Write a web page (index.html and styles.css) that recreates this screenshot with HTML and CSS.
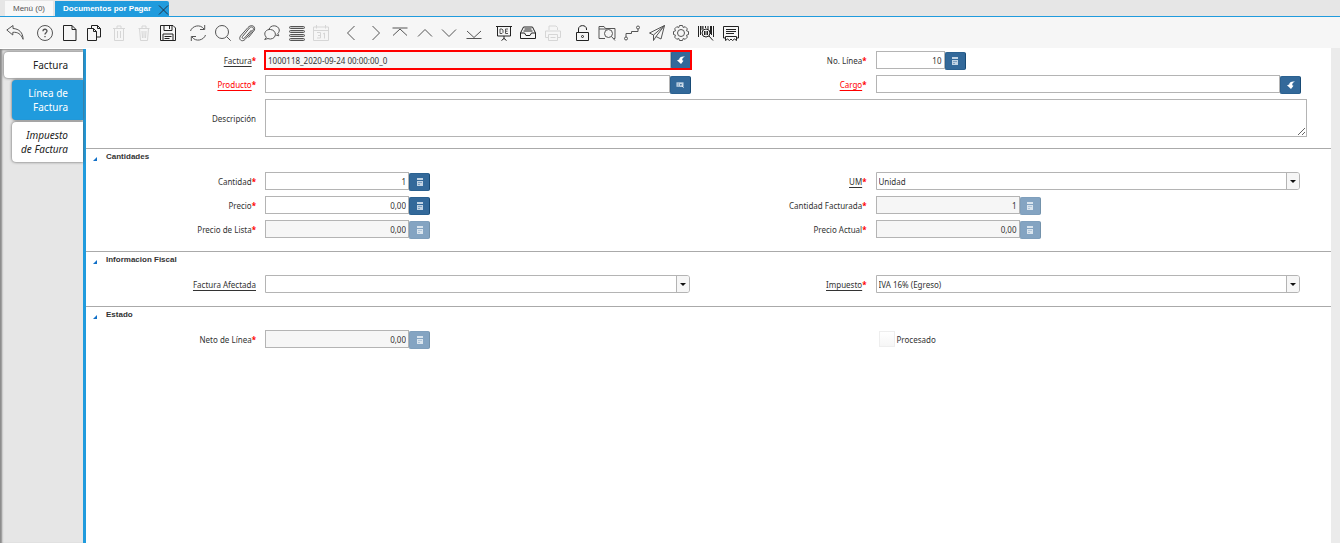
FILE: index.html
```html
<!DOCTYPE html>
<html lang="es">
<head>
  <meta charset="utf-8">
  <title>Documentos por Pagar</title>
  <link rel="stylesheet" href="styles.css">
</head>
<body>
  <svg class="sprite" width="0" height="0" aria-hidden="true">
    <symbol id="calc" viewBox="0 0 8 8"><path d="M1 0h6v8H1z" fill="#c2d4e4"/><path d="M1 2.500h6" stroke="#33699a" fill="none"/><path d="M2 4.500h4M2 6.500h2" stroke="#7ea0c0" fill="none"/></symbol>
    <symbol id="zoomto" viewBox="0 0 8 8"><path d="M8 .5C4.500 0 2.300 1.200 2.200 3.500L0 4.200 4 8l2.500-3.300-1.300-.5C5.200 2.500 6 1.500 8 .5z" fill="#fff"/></symbol>
    <symbol id="product" viewBox="0 0 9 8"><path d="M.5 1h8v5h-8z" fill="#c2d4e4"/><path d="M2.500 2v3" stroke="#7ea0c0"/><circle cx="5.500" cy="3.800" r="1.500" fill="#33699a" stroke="#fff" stroke-width=".7"/><path d="M6.500 5l2 2" stroke="#fff"/></symbol>
  </svg>

  <div class="tabs">
    <button class="tab">Menú (0)</button>
    <button class="tab active">Documentos por Pagar
      <svg width="11" height="10" viewBox="0 0 11 10"><path d="M1 .5l9 9M10 .5l-9 9"/></svg>
    </button>
  </div>

  <div class="toolbar">
    <button aria-label="Deshacer"><svg viewBox="0 0 18 18"><path d="M7 1.500L.8 6l6 5V8.300c5-.3 8 1.500 10.300 7C17 8.500 13 4.800 7 4.500z"/></svg></button>
    <button class="first" aria-label="Ayuda"><svg viewBox="0 0 18 18"><circle cx="9" cy="9" r="7.500"/><path d="M7 7.300c0-2.700 4-2.700 4-.2C11 8.700 9 8.700 9 10.500M9 12v1.200" stroke-width="1.300"/></svg></button>
    <button class="strong" aria-label="Nuevo"><svg viewBox="0 0 18 18"><path d="M2.500 1.500H11l4 4v11H2.500zM11 1.500v4h4"/></svg></button>
    <button class="strong" aria-label="Copiar"><svg viewBox="0 0 18 18"><path d="M6.500 4.500v-3h6l3 3v8.500h-4M12.500 1.500v3h3M2.500 4.500h6l3 3v9h-9zM8.500 4.500v3h3"/></svg></button>
    <button disabled aria-label="Borrar"><svg viewBox="0 0 18 18"><path d="M3 4.500h12M7 4V2h4v2M4.500 4.500v12h9v-12M7.500 7v7M10.500 7v7"/></svg></button>
    <button disabled aria-label="Borrar selección"><svg viewBox="0 0 18 18"><path d="M3.500 4.500h11M7 4V2h4v2M4.500 4.500l1 12h7l1-12M7 7l.5 7M9 7v7M11 7l-.5 7"/></svg></button>
    <button class="strong" aria-label="Guardar"><svg viewBox="0 0 18 18"><path d="M1.500 1.500H14l2.500 2.500v12.500h-15zM5 1.500v5h8v-5M10.500 2v3M4 16v-6h10v6M5.500 12.500h7M5.500 14.500h5"/></svg></button>
    <button class="first" aria-label="Refrescar"><svg viewBox="0 0 18 18"><path d="M1.500 7C3 2 11-.5 15 5M15.700 1v4.500H11M16.500 11c-1.500 5-9.500 7.500-13.500 2M2.300 17v-4.500H7"/></svg></button>
    <button aria-label="Buscar"><svg viewBox="0 0 18 18"><circle cx="8" cy="8" r="6.500"/><path d="M12.700 12.700l4 4"/></svg></button>
    <button aria-label="Adjuntos"><svg viewBox="0 0 18 18"><path d="M13.500 6l-7 8c-1.500 1.500-3-.2-2-1.500l7-8.500c2.500-2.500 5 0 3.500 2.200l-8 9.300c-3 3-7 0-4.500-3.500L10 3.500c2.500-3 7.500-2.500 6.500 2.500l-6 7.500"/></svg></button>
    <button aria-label="Chat"><svg viewBox="0 0 18 18"><path d="M6 5.500C7 .5 15.500 .5 16.300 6c0 1.800-.8 2.800-1.500 3.500l1 2.300-3.200-.9M3.300 13.300C-.5 9 3.500 5 7.500 5.500c6.500.8 6.500 9 0 9.500-1 0-2-.2-2.500-.5l-3.300 1z"/></svg></button>
    <button class="bars" aria-label="Cambiar a cuadrícula"><svg viewBox="0 0 18 18"><rect x="1.500" y="2.500" width="15" height="2" rx="1"/><rect x="1.500" y="6.500" width="15" height="2" rx="1"/><rect x="1.500" y="10.500" width="15" height="2" rx="1"/><rect x="1.500" y="14.500" width="15" height="2" rx="1"/></svg></button>
    <button disabled aria-label="Historial"><svg viewBox="0 0 18 18"><path d="M1.500 3h15v13.500h-15zM1.500 6.500h15M4.500 1v3.500M13.500 1v3.500M5 8.500h3.500v5.500H5M6 11.500h2.500M11 10l1.500-1v5.500"/></svg></button>
    <button class="first" aria-label="Anterior"><svg viewBox="0 0 18 18"><path d="M12.500 2L5.500 9l7 7"/></svg></button>
    <button aria-label="Siguiente"><svg viewBox="0 0 18 18"><path d="M5.500 2l7 7-7 7"/></svg></button>
    <button aria-label="Primero"><svg viewBox="0 0 18 18"><path d="M1.500 4h15M2 11.500L9 5l7 6.500"/></svg></button>
    <button aria-label="Registro previo"><svg viewBox="0 0 18 18"><path d="M2 12.500l7-7 7 7"/></svg></button>
    <button aria-label="Registro siguiente"><svg viewBox="0 0 18 18"><path d="M2 5.500l7 7 7-7"/></svg></button>
    <button aria-label="Último"><svg viewBox="0 0 18 18"><path d="M1.500 14.500h15M2 7l7 6.500L16 7"/></svg></button>
    <button class="first strong" aria-label="Informe"><svg viewBox="0 0 18 18"><path d="M1 2.500h16M2.500 2.500v9.500h13V2.500M9 12v3M6.500 16.500l2.500-2 2.500 2"/><path d="M5 5h2l1 1v2.500l-1 1H5zM13 5h-2.500v4.500H13M10.500 7.200h2" stroke="#555"/></svg></button>
    <button class="strong" aria-label="Archivo"><svg viewBox="0 0 18 18"><path d="M1.500 9L4.500 3h9l3 6v5.500h-15zM1.500 9h4l1.500 2.500h4L12.500 9h4M5.500 5h7M4.500 7h9"/></svg></button>
    <button disabled aria-label="Imprimir"><svg viewBox="0 0 18 18"><path d="M5 6V2h7l1.500 1.500V6M4 13.500H1.500V7h15v6.500H14M4.500 10.500h9v6h-9zM6.500 13.500h5"/></svg></button>
    <button class="first strong" aria-label="Bloquear"><svg viewBox="0 0 18 18"><path d="M2.500 8.500h12v8h-12zM4.500 8.500V5c0-4.500 8-4.500 8 0v1"/><circle cx="8.500" cy="12.500" r="1"/></svg></button>
    <button aria-label="Zoom a"><svg viewBox="0 0 18 18"><path d="M7 14.500H1v-12h5l1.500 2H17v10h-1.500M1 5h8"/><circle cx="10.500" cy="9.500" r="4"/><path d="M13.500 12.500l3.500 4"/></svg></button>
    <button aria-label="Flujo de trabajo"><svg viewBox="0 0 18 18"><circle cx="3" cy="14.500" r="1.500"/><circle cx="15" cy="3.500" r="1.500"/><path d="M3 13V9.500h5.500V7.500H15V5"/></svg></button>
    <button aria-label="Peticiones"><svg viewBox="0 0 18 18"><path d="M16.500 1.500L1.500 9l4 2 11-9.500L8 12.500l5 2.500zM5.500 11v5.500L8 12.500"/></svg></button>
    <button aria-label="Proceso"><svg viewBox="0 0 18 18"><path d="M7.500 1.500h3l.7 2 2-.8 2.100 2.100-.8 2 2 .7v3l-2 .7.8 2-2.100 2.100-2-.8-.7 2h-3l-.7-2-2 .8-2.100-2.100.8-2-2-.7v-3l2-.7-.8-2 2.100-2.100 2 .8z"/><circle cx="9" cy="9" r="3.500"/></svg></button>
    <button class="strong" aria-label="Información de producto"><svg viewBox="0 0 18 18"><path d="M1.500 2v11M3.500 2v9M6 2v3M8.500 2v2M11 2v3M13.500 2v8M16.500 2v11M5 2v4M14.500 2v9"/><circle cx="9" cy="9" r="4"/><path d="M7.500 7v4M9 7v4M10.500 7v4M12 12l4 4.500"/></svg></button>
    <button class="strong" aria-label="Personalizar"><svg viewBox="0 0 18 18"><path d="M3.500 14h-2V2.500h15V14h-2M4 5.500h10M4 7.500h10M4 9.500h8M3.500 16.500v-4h11v4l-2-1.500-2 1.500-1.500-1.500-1.500 1.500-2-1.500z"/></svg></button>
  </div>

  <div class="main">
    <div class="sidebar">
      <button class="side-tab parent">Factura</button>
      <button class="side-tab selected">Línea de Factura</button>
      <button class="side-tab child">Impuesto de Factura</button>
    </div>

    <form class="window">
      <div class="fields top">
        <label for="factura"><u>Factura</u><i>*</i></label>
        <div class="editor focused">
          <input type="text" id="factura" value="1000118_2020-09-24 00:00:00_0" readonly>
          <button type="button" aria-label="Abrir factura"><svg><use href="#zoomto"/></svg></button>
        </div>
        <label for="linea">No. Línea<i>*</i></label>
        <div class="editor short">
          <input type="text" id="linea" value="10">
          <button type="button" aria-label="Calculadora"><svg><use href="#calc"/></svg></button>
        </div>

        <label class="mandatory" for="producto"><u>Producto</u><i>*</i></label>
        <div class="editor">
          <input type="text" id="producto">
          <button type="button" aria-label="Buscar producto"><svg><use href="#product"/></svg></button>
        </div>
        <label class="mandatory" for="cargo"><u>Cargo</u><i>*</i></label>
        <div class="editor">
          <input type="text" id="cargo">
          <button type="button" aria-label="Abrir cargo"><svg><use href="#zoomto"/></svg></button>
        </div>

        <label for="descripcion">Descripción</label>
        <textarea id="descripcion"></textarea>
      </div>

      <section>
        <h2>Cantidades</h2>
        <div class="fields">
          <label for="cantidad">Cantidad<i>*</i></label>
          <div class="editor number">
            <input type="text" id="cantidad" value="1">
            <button type="button" aria-label="Calculadora"><svg><use href="#calc"/></svg></button>
          </div>
          <label for="um"><u>UM</u><i>*</i></label>
          <div class="combo"><select id="um"><option>Unidad</option></select></div>

          <label for="precio">Precio<i>*</i></label>
          <div class="editor number">
            <input type="text" id="precio" value="0,00">
            <button type="button" aria-label="Calculadora"><svg><use href="#calc"/></svg></button>
          </div>
          <label for="facturada">Cantidad Facturada<i>*</i></label>
          <div class="editor number">
            <input type="text" id="facturada" value="1" readonly>
            <button type="button" disabled aria-label="Calculadora"><svg><use href="#calc"/></svg></button>
          </div>

          <label for="lista">Precio de Lista<i>*</i></label>
          <div class="editor number">
            <input type="text" id="lista" value="0,00" readonly>
            <button type="button" disabled aria-label="Calculadora"><svg><use href="#calc"/></svg></button>
          </div>
          <label for="actual">Precio Actual<i>*</i></label>
          <div class="editor number">
            <input type="text" id="actual" value="0,00" readonly>
            <button type="button" disabled aria-label="Calculadora"><svg><use href="#calc"/></svg></button>
          </div>
        </div>
      </section>

      <section>
        <h2>Informacion Fiscal</h2>
        <div class="fields">
          <label for="afectada"><u>Factura Afectada</u></label>
          <div class="combo"><select id="afectada"><option></option></select></div>
          <label for="impuesto"><u>Impuesto</u><i>*</i></label>
          <div class="combo"><select id="impuesto"><option>IVA 16% (Egreso)</option></select></div>
        </div>
      </section>

      <section>
        <h2>Estado</h2>
        <div class="fields">
          <label for="neto">Neto de Línea<i>*</i></label>
          <div class="editor number">
            <input type="text" id="neto" value="0,00" readonly>
            <button type="button" disabled aria-label="Calculadora"><svg><use href="#calc"/></svg></button>
          </div>
          <div class="check">
            <input type="checkbox" id="procesado" disabled>
            <label for="procesado">Procesado</label>
          </div>
        </div>
      </section>
    </form>
  </div>
</body>
</html>
```
FILE: styles.css
```css
* {
  box-sizing: border-box;
}

body {
  margin: 0;
  min-height: 100vh;
  display: flex;
  flex-direction: column;
  background: #fff;
  color: #333;
  font-family: 'Noto Sans', sans-serif;
  font-size: 8px;
}

button, input, select, textarea {
  font: inherit;
  color: inherit;
  margin: 0;
}

.sprite {
  position: absolute;
}

/* window tabs */
.tabs {
  display: flex;
  gap: 2px;
  height: 17px;
  padding: 1px 5px 0;
  background: #e6e6e6;
  border-bottom: 1px solid #209bdd;
}

.tab {
  display: flex;
  align-items: center;
  gap: 7px;
  padding: 0 8px;
  border: 0;
  background: #f8f8f8;
  color: #555;
  font-family: 'Liberation Sans', sans-serif;
}

.tab.active {
  padding-right: 0;
  background: #209bdd;
  color: #fff;
  font-weight: bold;
  border-radius: 0 2px 0 0;
}

.tab svg {
  margin-top: 2px;
  stroke: #234;
}

/* toolbar */
.toolbar {
  display: flex;
  align-items: center;
  height: 31px;
  padding: 0 597px 0 3px;
  background: #f6f6f6;
}

.toolbar button {
  flex: 1;
  display: flex;
  justify-content: center;
  padding: 0;
  border: 0;
  background: none;
}

.toolbar .first {
  margin-left: 5px;
}

.toolbar svg {
  width: 18px;
  height: 18px;
  flex: none;
  fill: none;
  stroke: #555;
}

.toolbar .strong svg {
  stroke: #222;
}

.toolbar .bars svg {
  fill: #ccc;
}

.toolbar button:disabled svg {
  stroke: #d6d6d6;
}

/* record tabs */
.main {
  flex: 1;
  display: flex;
}

.sidebar {
  width: 86px;
  display: flex;
  flex-direction: column;
  align-items: flex-end;
  gap: 2px;
  margin-top: 1px;
  padding-top: 3px;
  background: #e6e6e6;
  border-right: 3px solid #209bdd;
  box-shadow: inset 2px 1px 2px #888;
}

.side-tab {
  width: 71px;
  padding: 6px 15px 6px 0;
  border: 0;
  border-radius: 4px 0 0 4px;
  background: #fff;
  box-shadow: 0 0 3px #555;
  font-size: 10px;
  line-height: 14px;
  text-align: right;
  color: #222;
}

.side-tab.parent {
  width: 79px;
}

.side-tab.selected {
  height: 40px;
  background: #209bdd;
  color: #fff;
}

.side-tab.child {
  height: 40px;
  padding-left: 4px;
  font-style: italic;
}

/* record form */
.window {
  flex: 1;
  padding-top: 3px;
  border-right: 9px solid #ebebeb;
}

.fields {
  display: grid;
  grid-template-columns: 170px minmax(0, 1fr) 168px minmax(0, 1fr);
  column-gap: 9px;
  row-gap: 6px;
  align-items: center;
  padding: 0 31px 13px 0;
}

.fields.top {
  padding-bottom: 11px;
}

.fields label {
  height: 18px;
  text-align: right;
  line-height: 20px;
}

.fields u {
  text-underline-offset: 2px;
}

.fields i {
  color: #f00;
  font-style: normal;
  font-weight: bold;
}

.fields .mandatory {
  color: #f00;
}

.fields input, .fields textarea, .fields select {
  border: 1px solid #b4b4b4;
  border-radius: 0;
  background: #fff;
  padding: 0 2px;
  outline: none;
}

.fields textarea {
  display: block;
  grid-column: span 3;
  height: 38px;
  margin-right: -7px;
  resize: vertical;
}

.editor {
  display: flex;
  height: 18px;
  margin-right: -1px;
}

.editor input {
  flex: 1;
  min-width: 0;
  height: 18px;
}

.fields .editor input:read-only {
  background: #f6f6f6;
}

.editor button {
  display: flex;
  align-items: center;
  justify-content: center;
  width: 21px;
  height: 18px;
  margin-top: 1px;
  padding: 0;
  border: 1px solid #2b6190;
  border-right-color: #174a75;
  border-radius: 2px;
  background: #33699a;
}

.editor button:disabled {
  opacity: 0.6;
}

.editor svg {
  width: 8px;
  height: 8px;
}

/* the border is painted over the field, button included */
.editor.focused {
  height: 20px;
  margin: -1px -2px -1px -1px;
  outline: 2px solid #f00;
  outline-offset: -2px;
}

.editor.focused input {
  height: 20px;
  padding-left: 3px;
}

.number {
  width: 165px;
}

.short {
  width: 90px;
}

.number input, .short input {
  text-align: right;
}

.combo {
  position: relative;
  height: 18px;
}

.combo select {
  display: block;
  width: 100%;
  height: 18px;
  appearance: none;
  border-radius: 0 3px 3px 0;
}

.combo::before {
  content: "";
  position: absolute;
  top: 1px;
  right: 1px;
  width: 12px;
  height: 16px;
  border-left: 1px solid #b4b4b4;
  border-radius: 0 2px 2px 0;
  background: #f6f6f6;
  pointer-events: none;
}

.combo::after {
  content: "";
  position: absolute;
  top: 8px;
  right: 4px;
  border: 3px solid transparent;
  border-top-color: #111;
  border-bottom: 0;
  pointer-events: none;
}

.check {
  grid-column: 4;
  display: flex;
  align-items: center;
  gap: 2px;
  padding-left: 3px;
}

.check input {
  appearance: none;
  width: 16px;
  height: 16px;
  margin: 0;
  border: 1px solid #eee;
  background: linear-gradient(#fff, #f6f6f6);
}

section {
  border-top: 1px solid #aaa;
}

h2 {
  display: flex;
  align-items: center;
  gap: 9px;
  height: 23px;
  margin: 0;
  padding: 0 0 8px 7px;
  color: #333;
  font: bold 8px 'Liberation Sans', sans-serif;
}

/* fold marker */
h2::before {
  content: "";
  margin-top: 5px;
  border-left: 4px solid transparent;
  border-bottom: 4px solid #1170c8;
}
```
